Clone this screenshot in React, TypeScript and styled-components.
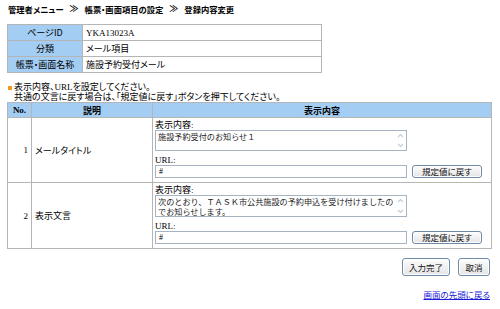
import styled, { createGlobalStyle } from 'styled-components';

const GlobalStyle = createGlobalStyle`
	*, *::before, *::after {
		box-sizing: border-box;
	}
	html, body {
		margin: 0;
		padding: 0;
		background: #ffffff;
	}
	body {
		font-family: 'Liberation Serif', 'Noto Sans CJK JP', serif;
		font-size: 9px;
		color: #000000;
		font-feature-settings: 'palt';
	}
`;

const Page = styled.div`
	padding: 2px 9px 0 7px;
	width: 500px;
`;

const Breadcrumb = styled.div`
	display: flex;
	align-items: center;
	gap: 6px;
	height: 13px;
	font-family: 'Noto Sans CJK JP', sans-serif;
	font-weight: bold;
	font-size: 8.3px;
	margin-left: 1px;
`;

const Crumb = styled.span``;

const Sep = styled.span`
	font-size: 9px;
`;

const Grid = styled.table<{ $width: number }>`
	width: ${(p) => p.$width}px;
	border-collapse: collapse;
	table-layout: fixed;
	border: 1px solid #9c9c9c;

	th,
	td {
		border: 1px solid #b5b5b5;
		padding: 0;
	}
`;

const InfoTable = styled(Grid)`
	margin-top: 9px;

	tr {
		height: 16px;
	}
`;

const LabelCell = styled.th`
	background: #a3cdf3;
	font-weight: normal;
	text-align: center;
	font-family: 'Noto Sans CJK JP', sans-serif;
	width: 75px;
`;

const ValueCell = styled.td`
	padding-left: 3px !important;
	font-family: 'Liberation Serif', 'Noto Sans CJK JP', serif;
`;

const Note = styled.div`
	margin-top: 9px;
	line-height: 10px;
	font-family: 'Liberation Serif', 'Noto Sans CJK JP', serif;
`;

const NoteLine = styled.div<{ $bullet?: boolean }>`
	position: relative;
	padding-left: 7px;

	&::before {
		content: '';
		display: ${(p) => (p.$bullet ? 'block' : 'none')};
		position: absolute;
		left: 1px;
		top: 4px;
		width: 4px;
		height: 4px;
		background: #f39a1e;
	}
`;

const MainTable = styled(Grid)`
	margin-top: 0;
`;

const HeadCell = styled.th<{ $w?: number }>`
	background: #a3cdf3;
	height: 15px;
	font-weight: bold;
	text-align: center;
	${(p) => (p.$w ? `width: ${p.$w}px;` : '')}
`;

const NoCell = styled.td`
	text-align: right;
	padding-right: 3px !important;
	vertical-align: middle;
`;

const DescCell = styled.td`
	padding-left: 3px !important;
	vertical-align: middle;
	font-family: 'Noto Sans CJK JP', sans-serif;
`;

const ContentCell = styled.td`
	padding: 2px 3px 4px 2px !important;
	vertical-align: top;
`;

const FieldLabel = styled.div<{ $top?: number }>`
	line-height: 10px;
	padding-top: ${(p) => p.$top ?? 0}px;
	height: ${(p) => 10 + (p.$top ?? 0)}px;
`;

const TextBox = styled.div`
	display: flex;
	width: 252px;
	border: 1px solid #a6b3c2;
	background: #ffffff;
`;

const Area = styled.textarea<{ $h: number }>`
	flex: 1;
	min-width: 0;
	border: none;
	outline: none;
	resize: none;
	padding: 1px 0 0 2px;
	height: ${(p) => p.$h}px;
	font-family: 'Noto Sans CJK JP', sans-serif;
	font-feature-settings: normal;
	font-size: 8.15px;
	line-height: 9.5px;
	overflow: hidden;
	background: transparent;
	color: #222222;
`;

const ScrollRail = styled.div`
	width: 10px;
	flex: none;
	display: flex;
	flex-direction: column;
	justify-content: space-between;
	align-items: center;
	padding: 2px 1px 2px 0;
`;

const UrlRow = styled.div`
	display: flex;
	align-items: center;
	gap: 5px;
`;

const UrlInput = styled.input`
	width: 252px;
	height: 13px;
	border: 1px solid #a6b3c2;
	padding: 0 3px;
	font-size: 8px;
	font-family: 'Liberation Serif', serif;
	outline: none;
`;

const PushButton = styled.button<{ $w: number; $h: number }>`
	width: ${(p) => p.$w}px;
	height: ${(p) => p.$h}px;
	padding: 0;
	border: 1px solid #6f8aa6;
	border-radius: 3px;
	box-shadow: inset 0 0 0 1px #ffffff;
	background: linear-gradient(#fdfdfd, #e4e4e4);
	font-family: 'Noto Sans CJK JP', sans-serif;
	font-feature-settings: 'palt';
	font-size: 8.5px;
	color: #111111;
	line-height: 1;
`;

const ActionBar = styled.div`
	display: flex;
	justify-content: flex-end;
	gap: 8px;
	margin-top: 9px;
	padding-right: 1px;
`;

const TopLink = styled.div`
	display: flex;
	justify-content: flex-end;
	margin-top: 12px;
	padding-right: 1px;

	a {
		color: #1a1ad8;
		font-family: 'Noto Sans CJK JP', sans-serif;
		font-size: 8.5px;
		text-decoration: underline;
	}
`;

const Chevron = ({ up }: { up?: boolean }) => (
	<svg width='7' height='5' viewBox='0 0 7 5'>
		<path
			d={up ? 'M1 4 L3.5 1.5 L6 4' : 'M1 1 L3.5 3.5 L6 1'}
			fill='none'
			stroke='#c4ccd6'
			strokeWidth='1.2'
		/>
	</svg>
);

type Row = {
	no: number;
	desc: string;
	text: string;
	h: number;
};

const items: Row[] = [
	{ no: 1, desc: 'メールタイトル', text: '施設予約受付のお知らせ１', h: 19 },
	{
		no: 2,
		desc: '表示文言',
		text: '次のとおり、ＴＡＳＫ市公共施設の予約申込を受け付けましたのでお知らせします。',
		h: 20,
	},
];

export default function App() {
	return (
		<Page>
			<GlobalStyle />
			<Breadcrumb>
				<Crumb>管理者メニュー</Crumb>
				<Sep>≫</Sep>
				<Crumb>帳票・画面項目の設定</Crumb>
				<Sep>≫</Sep>
				<Crumb>登録内容変更</Crumb>
			</Breadcrumb>

			<InfoTable $width={315}>
				<tbody>
					<tr>
						<LabelCell>ページID</LabelCell>
						<ValueCell>YKA13023A</ValueCell>
					</tr>
					<tr>
						<LabelCell>分類</LabelCell>
						<ValueCell>メール項目</ValueCell>
					</tr>
					<tr>
						<LabelCell>帳票・画面名称</LabelCell>
						<ValueCell>施設予約受付メール</ValueCell>
					</tr>
				</tbody>
			</InfoTable>

			<Note>
				<NoteLine $bullet>表示内容、URLを設定してください。</NoteLine>
				<NoteLine>共通の文言に戻す場合は、「規定値に戻す」ボタンを押下してください。</NoteLine>
			</Note>

			<MainTable $width={485}>
				<thead>
					<tr>
						<HeadCell $w={24}>No.</HeadCell>
						<HeadCell $w={121}>説明</HeadCell>
						<HeadCell>表示内容</HeadCell>
					</tr>
				</thead>
				<tbody>
					{items.map((item) => (
						<tr key={item.no}>
							<NoCell>{item.no}</NoCell>
							<DescCell>{item.desc}</DescCell>
							<ContentCell>
								<FieldLabel>表示内容:</FieldLabel>
								<TextBox>
									<Area $h={item.h} defaultValue={item.text} />
									<ScrollRail>
										<Chevron up />
										<Chevron />
									</ScrollRail>
								</TextBox>
								<FieldLabel $top={4}>URL:</FieldLabel>
								<UrlRow>
									<UrlInput defaultValue='#' />
									<PushButton $w={70} $h={13}>
										規定値に戻す
									</PushButton>
								</UrlRow>
							</ContentCell>
						</tr>
					))}
				</tbody>
			</MainTable>

			<ActionBar>
				<PushButton $w={48} $h={18}>
					入力完了
				</PushButton>
				<PushButton $w={32} $h={18}>
					取消
				</PushButton>
			</ActionBar>

			<TopLink>
				<a href='#'>画面の先頭に戻る</a>
			</TopLink>
		</Page>
	);
}
